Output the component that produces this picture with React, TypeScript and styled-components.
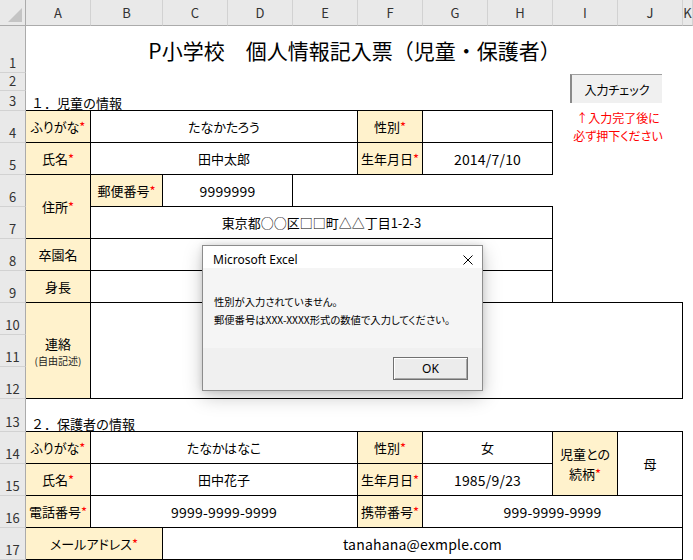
import React from 'react'
import styled, { createGlobalStyle } from 'styled-components'

const COL_W = [65, 72, 65, 65, 65, 65, 65, 65, 65, 65]
const ROW_H = [47, 18, 20, 32, 32, 32, 32, 32, 32, 32, 32, 32, 33, 32, 32, 32, 32]
const LETTERS = 'ABCDEFGHIJK'.split('')
const FONT = '"Noto Sans CJK JP", "Noto Sans", sans-serif'

const GlobalStyle = createGlobalStyle`
  html, body { margin: 0; padding: 0; background: #fff; }
  body { font-family: ${FONT}; color: #000; }
`

// "B4:E4" -> grid-area (header row/column occupy line 1)
const area = (ref: string) => {
    const [a, b = a] = ref.split(':')
    const parse = (s: string) => ({ c: s.charCodeAt(0) - 65, r: parseInt(s.slice(1), 10) })
    const s = parse(a)
    const e = parse(b)
    return `${s.r + 1} / ${s.c + 2} / ${e.r + 2} / ${e.c + 3}`
}

const Sheet = styled.div`
    position: relative;
    width: 693px;
    height: 560px;
    overflow: hidden;
    display: grid;
    grid-template-columns: 26px ${COL_W.map(w => w + 'px').join(' ')} 1fr;
    grid-template-rows: 26px ${ROW_H.map(h => h + 'px').join(' ')};
    font-family: ${FONT};
    font-feature-settings: "palt";
    background: #fff;
`

const Corner = styled.div`
    grid-area: 1 / 1 / 2 / 2;
    position: relative;
    background: #e9e9e9;
    border-right: 1px solid #ababab;
    border-bottom: 1px solid #ababab;
    &::after {
        content: '';
        position: absolute;
        right: 3px;
        bottom: 3px;
        border-style: solid;
        border-width: 0 0 14px 14px;
        border-color: transparent transparent #c4c4c4 transparent;
    }
`

const ColHead = styled.div<{ $col: number }>`
    grid-area: 1 / ${p => p.$col + 2} / 2 / ${p => p.$col + 3};
    background: #e9e9e9;
    border-right: 1px solid #d2d2d2;
    border-bottom: 1px solid #ababab;
    display: flex;
    align-items: center;
    justify-content: center;
    font-size: 13px;
    color: #333;
`

const RowHead = styled.div<{ $row: number }>`
    grid-area: ${p => p.$row + 1} / 1 / ${p => p.$row + 2} / 2;
    background: #e9e9e9;
    border-right: 1px solid #ababab;
    border-bottom: 1px solid #d2d2d2;
    display: flex;
    align-items: flex-end;
    justify-content: center;
    padding-bottom: 1px;
    font-size: 13px;
    line-height: 17px;
    color: #333;
    box-sizing: border-box;
`

const Box = styled.div<{ $area: string; $label?: boolean }>`
    grid-area: ${p => p.$area};
    background: ${p => (p.$label ? '#fff2cc' : '#fff')};
    border-right: 1px solid #000;
    border-bottom: 1px solid #000;
    box-shadow: 0 -1px 0 #000;
    display: flex;
    flex-direction: column;
    align-items: center;
    justify-content: center;
    font-size: 13px;
    line-height: 20px;
    text-align: center;
    white-space: nowrap;
`

const Latin = styled.span`
    font-size: 14px;
    letter-spacing: 0.2px;
`

const Req = styled.span`
    color: #ff0000;
`

const Small = styled.span`
    font-size: 10px;
    line-height: 14px;
    color: #222;
`

const Title = styled.div`
    grid-area: ${area('A1:J1')};
    display: flex;
    align-items: center;
    justify-content: center;
    padding-top: 1px;
    font-size: 21px;
    font-feature-settings: normal;
    white-space: nowrap;
`

const Section = styled.div<{ $area: string }>`
    grid-area: ${p => p.$area};
    display: flex;
    align-items: flex-end;
    padding-left: 5px;
    font-size: 13px;
    line-height: 17px;
    font-feature-settings: normal;
    white-space: nowrap;
`

const Note = styled.div`
    grid-area: ${area('I4:J4')};
    display: flex;
    flex-direction: column;
    align-items: center;
    justify-content: center;
    color: #ff0000;
    font-size: 12px;
    line-height: 18px;
    white-space: nowrap;
`

const CheckButton = styled.div`
    position: absolute;
    left: 570px;
    top: 74px;
    width: 92px;
    height: 29px;
    box-sizing: border-box;
    background: #f0f0f0;
    border-top: 1px solid #a0a0a0;
    border-left: 2px solid #8a8a8a;
    display: flex;
    align-items: center;
    justify-content: center;
    font-size: 12px;
`

const Dialog = styled.div`
    position: absolute;
    left: 202px;
    top: 245px;
    width: 281px;
    height: 146px;
    box-sizing: border-box;
    border: 1px solid #8c8c8c;
    background: #f0f0f0;
    box-shadow: 0 6px 18px rgba(0, 0, 0, 0.22), 0 0 6px rgba(0, 0, 0, 0.12);
    display: flex;
    flex-direction: column;
`

const TitleBar = styled.div`
    height: 22px;
    box-sizing: border-box;
    background: #fff;
    display: flex;
    justify-content: space-between;
    padding: 6px 9px 0 10px;
    font-family: "Noto Sans", "Open Sans", sans-serif;
    font-size: 12px;
    line-height: 16px;
    color: #000;
`

const Close = styled.svg`
    margin-top: 3px;
`

const Message = styled.div`
    height: 80px;
    box-sizing: border-box;
    background: #f5f5f5;
    padding: 25px 0 0 11px;
    font-size: 10.3px;
    line-height: 18px;
    white-space: nowrap;
`

const Footer = styled.div`
    flex: 1;
    display: flex;
    justify-content: flex-end;
    align-items: flex-start;
    padding: 9px 14px 0 0;
`

const OkButton = styled.div`
    width: 75px;
    height: 23px;
    box-sizing: border-box;
    border: 1px solid #707070;
    background: #ececec;
    box-shadow: inset 1px 1px 0 #fff, inset -1px -1px 0 #a8a8a8;
    display: flex;
    align-items: center;
    justify-content: center;
    font-family: "Noto Sans", "Open Sans", sans-serif;
    font-size: 12px;
`

type CellDef = { at: string; label?: boolean; req?: boolean; text?: React.ReactNode }

const cells: CellDef[] = [
    { at: 'A4', label: true, req: true, text: 'ふりがな' },
    { at: 'B4:E4', text: 'たなかたろう' },
    { at: 'F4', label: true, req: true, text: '性別' },
    { at: 'G4:H4' },
    { at: 'A5', label: true, req: true, text: '氏名' },
    { at: 'B5:E5', text: '田中太郎' },
    { at: 'F5', label: true, req: true, text: '生年月日' },
    { at: 'G5:H5', text: '2014/7/10' },
    { at: 'A6:A7', label: true, req: true, text: '住所' },
    { at: 'B6', label: true, req: true, text: '郵便番号' },
    { at: 'C6:D6', text: '9999999' },
    { at: 'B7:H7', text: '東京都○○区□□町△△丁目1-2-3' },
    { at: 'A8', label: true, text: '卒園名' },
    { at: 'B8:H8' },
    { at: 'A9', label: true, text: '身長' },
    { at: 'B9:H9' },
    { at: 'A10:A12', label: true, text: <><span>連絡</span><Small>(自由記述)</Small></> },
    { at: 'B10:J12' },
    { at: 'A14', label: true, req: true, text: 'ふりがな' },
    { at: 'B14:E14', text: 'たなかはなこ' },
    { at: 'F14', label: true, req: true, text: '性別' },
    { at: 'G14:H14', text: '女' },
    { at: 'I14:I15', label: true, text: <><span>児童との</span><span>続柄<Req>*</Req></span></> },
    { at: 'J14:J15', text: '母' },
    { at: 'A15', label: true, req: true, text: '氏名' },
    { at: 'B15:E15', text: '田中花子' },
    { at: 'F15', label: true, req: true, text: '生年月日' },
    { at: 'G15:H15', text: '1985/9/23' },
    { at: 'A16', label: true, req: true, text: '電話番号' },
    { at: 'B16:E16', text: '9999-9999-9999' },
    { at: 'F16', label: true, req: true, text: '携帯番号' },
    { at: 'G16:J16', text: '999-9999-9999' },
    { at: 'A17:B17', label: true, req: true, text: 'メールアドレス' },
    { at: 'C17:J17', text: 'tanahana@exmple.com' },
]

const isLatin = (s: string) => /^[\x20-\x7e]+$/.test(s)

const App: React.FC = () => (
    <>
        <GlobalStyle />
        <Sheet>
            <Corner />
            {LETTERS.map((l, i) => (
                <ColHead key={l} $col={i}>{l}</ColHead>
            ))}
            {ROW_H.map((_, i) => (
                <RowHead key={i} $row={i + 1}>{i + 1}</RowHead>
            ))}

            <Title>P小学校　個人情報記入票（児童・保護者）</Title>
            <Section $area={area('A3:E3')}>１．児童の情報</Section>
            <Section $area={area('A13:E13')}>２．保護者の情報</Section>
            <Note>
                <span>↑入力完了後に</span>
                <span>必ず押下ください</span>
            </Note>

            {cells.map(c => (
                <Box key={c.at} $area={area(c.at)} $label={c.label}>
                    {typeof c.text === 'string' ? (
                        isLatin(c.text) ? (
                            <Latin>{c.text}</Latin>
                        ) : (
                            <span>
                                {c.text}
                                {c.req && <Req>*</Req>}
                            </span>
                        )
                    ) : (
                        c.text
                    )}
                </Box>
            ))}

            <CheckButton>入力チェック</CheckButton>

            <Dialog>
                <TitleBar>
                    <span>Microsoft Excel</span>
                    <Close width="10" height="10" viewBox="0 0 10 10">
                        <path d="M0.5 0.5 L9.5 9.5 M9.5 0.5 L0.5 9.5" stroke="#000" strokeWidth="1" fill="none" />
                    </Close>
                </TitleBar>
                <Message>
                    <div>性別が入力されていません。</div>
                    <div>郵便番号はXXX-XXXX形式の数値で入力してください。</div>
                </Message>
                <Footer>
                    <OkButton>OK</OkButton>
                </Footer>
            </Dialog>
        </Sheet>
    </>
)

export default App
